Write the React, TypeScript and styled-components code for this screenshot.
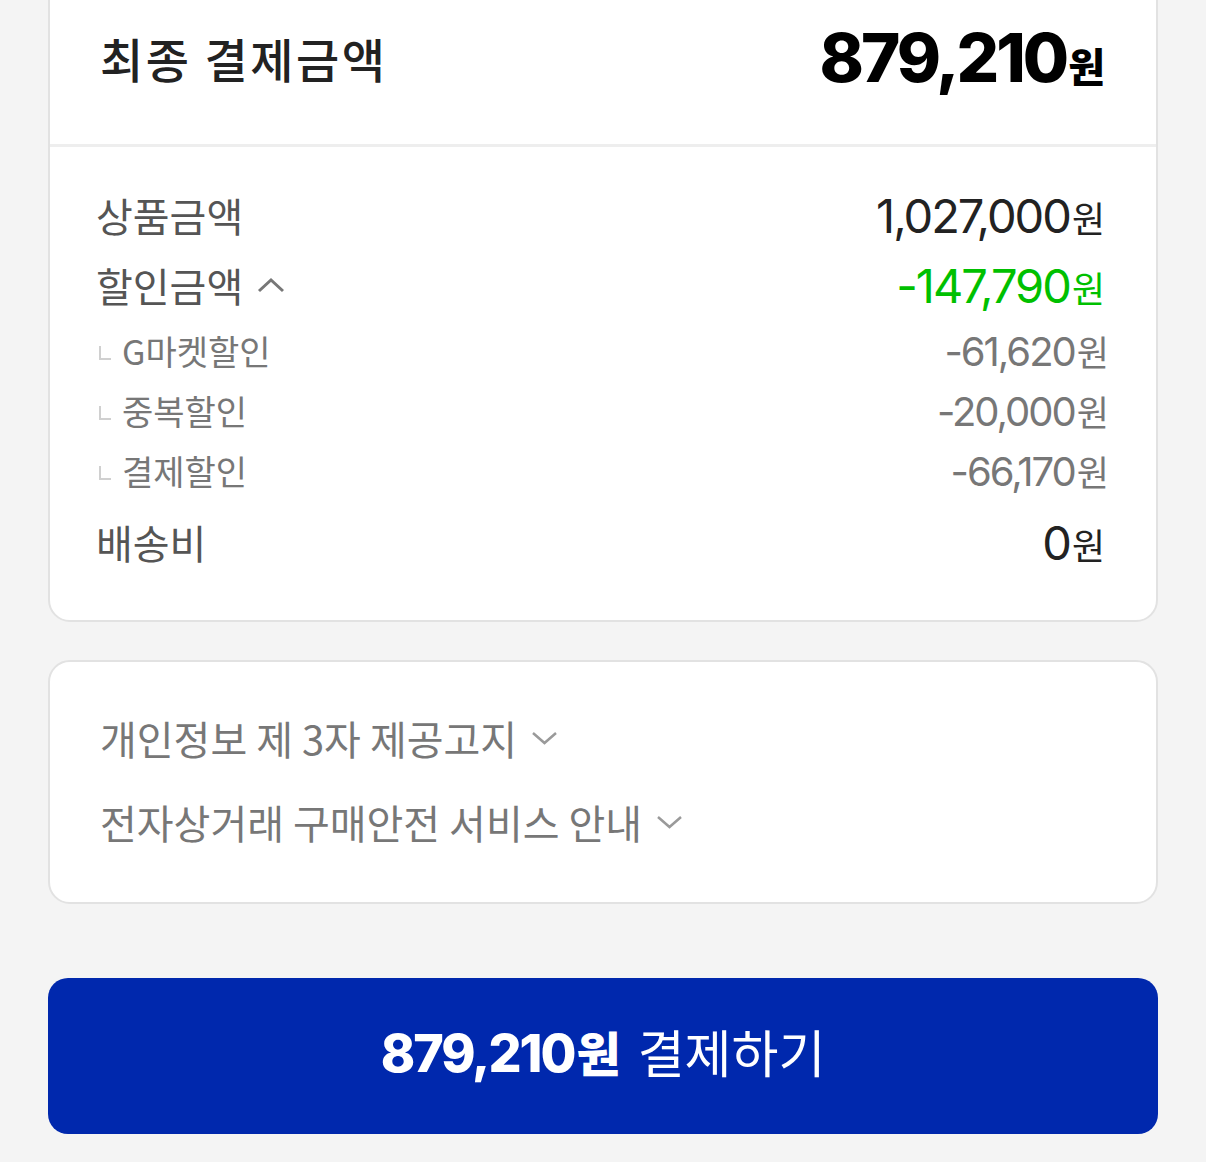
import React from 'react';
import styled, { createGlobalStyle } from 'styled-components';

const GlobalStyle = createGlobalStyle`
  html, body {
    margin: 0;
    padding: 0;
    background: #f4f4f4;
  }
  body {
    font-family: "Noto Sans CJK KR", "Noto Sans", sans-serif;
    overflow: hidden;
  }
`;

const KR = `"Noto Sans CJK KR", "Noto Sans", sans-serif`;
const NUM = `Inter, "Noto Sans CJK KR", sans-serif`;

/** Style */

const Page = styled.div`
  padding: 0 48px;
  height: 1162px;
  box-sizing: border-box;
`;

const Card = styled.section<{ $top?: number }>`
  background: #fff;
  border: 2px solid #e2e2e2;
  border-radius: 22px;
  margin-top: ${(p) => p.$top ?? 0}px;
  overflow: hidden;
`;

const Header = styled.div`
  height: 171px;
  box-sizing: border-box;
  display: flex;
  align-items: center;
  justify-content: space-between;
  padding: 0 51px 5px 50px;
  border-bottom: 3px solid #eeeeee;
`;

const Title = styled.h2`
  margin: 0;
  font-family: ${KR};
  font-size: 47px;
  font-weight: 500;
  color: #222;
  letter-spacing: 2.5px;
`;

const Total = styled.div`
  font-family: ${NUM};
  font-size: 67px;
  font-weight: 800;
  letter-spacing: -3px;
  color: #000;
  display: flex;
  align-items: baseline;
`;

const Won = styled.span<{ $size: number }>`
  font-family: ${KR};
  font-size: ${(p) => p.$size}px;
  letter-spacing: 0;
  margin-left: 2px;
`;

const Body = styled.div`
  padding: 33px 51px 43px 46px;
`;

const Row = styled.div<{ $sub?: boolean; $gap?: number }>`
  height: ${(p) => (p.$sub ? 60 : 70)}px;
  margin-top: ${(p) => p.$gap ?? 0}px;
  display: flex;
  align-items: center;
  justify-content: space-between;
`;

const Label = styled.span<{ $sub?: boolean }>`
  font-family: ${KR};
  font-size: ${(p) => (p.$sub ? 34 : 40)}px;
  color: ${(p) => (p.$sub ? '#777' : '#555')};
  display: flex;
  align-items: center;
`;

const Corner = styled.i`
  display: inline-block;
  width: 10px;
  height: 12px;
  border-left: 2px solid #d0d0d0;
  border-bottom: 2px solid #d0d0d0;
  margin: 6px 11px 0 3px;
`;

const Amount = styled.span<{ $tone: 'main' | 'green' | 'sub' }>`
  font-family: ${NUM};
  font-size: ${(p) => (p.$tone === 'sub' ? 40 : 47)}px;
  font-weight: 400;
  letter-spacing: -2px;
  color: ${(p) => (p.$tone === 'green' ? '#00c000' : p.$tone === 'sub' ? '#777' : '#222')};
  display: flex;
  align-items: baseline;
  margin-right: ${(p) => (p.$tone === 'sub' ? -4 : 0)}px;
`;

const Chevron = styled.svg`
  margin-left: 14px;
  flex: none;
`;

const Notices = styled.div`
  padding: 34px 50px 38px;
`;

const Notice = styled.div`
  height: 84px;
  display: flex;
  align-items: center;
  font-family: ${KR};
  font-size: 40px;
  color: #777;
`;

const PayButton = styled.button`
  margin-top: 74px;
  width: 100%;
  height: 156px;
  padding: 0 0 10px;
  border: 0;
  border-radius: 20px;
  background: #0028ad;
  color: #fff;
  display: flex;
  align-items: center;
  justify-content: center;
  gap: 17px;
  cursor: pointer;
`;

const PayAmount = styled.span`
  font-family: ${NUM};
  font-size: 52px;
  font-weight: 800;
  letter-spacing: -2px;
  display: flex;
  align-items: baseline;
`;

const PayLabel = styled.span`
  font-family: ${KR};
  font-size: 51px;
  font-weight: 400;
`;

/** End */

const Up = () => (
  <Chevron width="28" height="18" viewBox="0 0 28 18">
    <path d="M2 15 L14 4 L26 15" fill="none" stroke="#777" strokeWidth="3" />
  </Chevron>
);

const Down = () => (
  <Chevron width="27" height="16" viewBox="0 0 27 16">
    <path d="M2 3 L13.5 13 L25 3" fill="none" stroke="#9a9a9a" strokeWidth="2.5" />
  </Chevron>
);

const discounts = [
  { label: 'G마켓할인', value: '-61,620' },
  { label: '중복할인', value: '-20,000' },
  { label: '결제할인', value: '-66,170' },
];

export default function App() {
  return (
    <Page>
      <GlobalStyle />
      <Card $top={-26}>
        <Header>
          <Title>최종 결제금액</Title>
          <Total>
            879,210<Won $size={40}>원</Won>
          </Total>
        </Header>
        <Body>
          <Row>
            <Label>상품금액</Label>
            <Amount $tone="main">
              1,027,000<Won $size={36}>원</Won>
            </Amount>
          </Row>
          <Row>
            <Label>
              할인금액
              <Up />
            </Label>
            <Amount $tone="green">
              -147,790<Won $size={36}>원</Won>
            </Amount>
          </Row>
          {discounts.map((d) => (
            <Row $sub key={d.label}>
              <Label $sub>
                <Corner />
                {d.label}
              </Label>
              <Amount $tone="sub">
                {d.value}
                <Won $size={35}>원</Won>
              </Amount>
            </Row>
          ))}
          <Row $gap={7}>
            <Label>배송비</Label>
            <Amount $tone="main">
              0<Won $size={36}>원</Won>
            </Amount>
          </Row>
        </Body>
      </Card>
      <Card $top={38}>
        <Notices>
          <Notice>
            개인정보 제 3자 제공고지
            <Down />
          </Notice>
          <Notice>
            전자상거래 구매안전 서비스 안내
            <Down />
          </Notice>
        </Notices>
      </Card>
      <PayButton>
        <PayAmount>
          879,210<Won $size={48}>원</Won>
        </PayAmount>
        <PayLabel>결제하기</PayLabel>
      </PayButton>
    </Page>
  );
}
